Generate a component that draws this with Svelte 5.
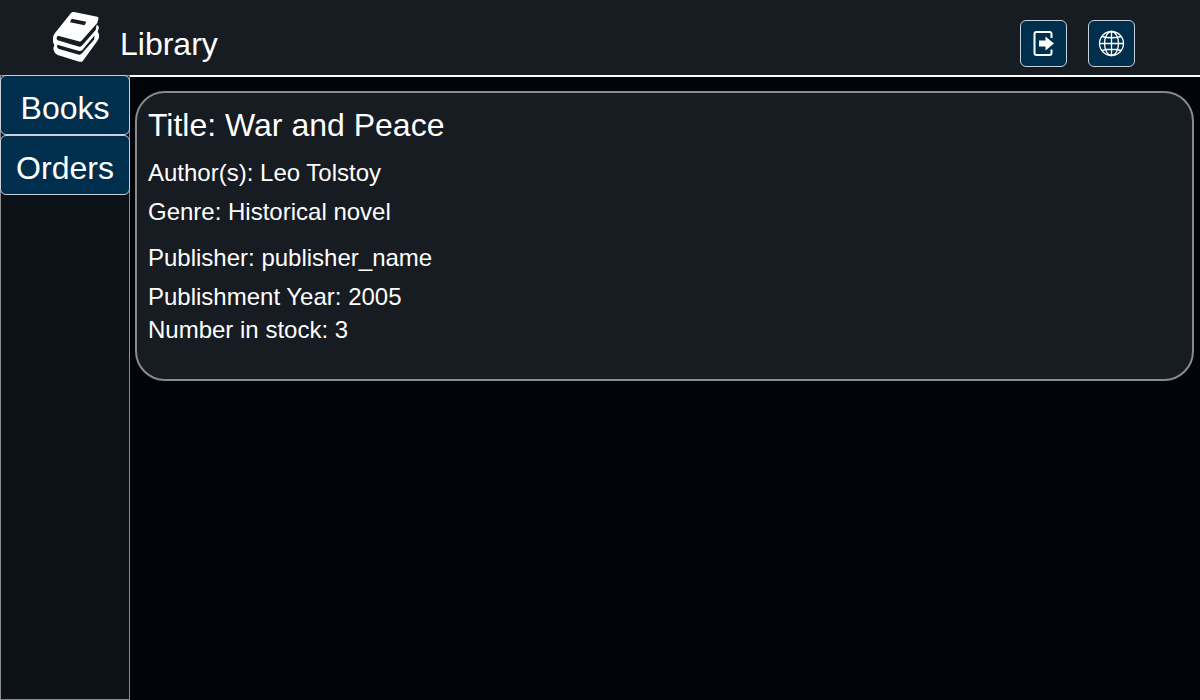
<script>
  const sections = ['Books', 'Orders'];
  const details = [
    { label: 'Author(s)', value: 'Leo Tolstoy', kind: 'wide' },
    { label: 'Genre', value: 'Historical novel', kind: 'wide last' },
    { label: 'Publisher', value: 'publisher_name', kind: 'wide' },
    { label: 'Publishment Year', value: '2005', kind: '' },
    { label: 'Number in stock', value: '3', kind: '' }
  ];
</script>

<div class="page">
  <header>
    <a class="brand" href="#home">
      <svg class="logo" viewBox="36 33 144 156" aria-hidden="true">
        <path fill="#fff" d="M93 39Q97 35 102 36L172 50Q178 52 175 58L170 74Q178 77 176 86L173 95Q179 101 177 111Q176 118 172 123L129 182Q125 187 118 185L53 165Q43 161 41 151Q39 143 43 136Q37 127 39 116Q39 106 45 99Z" />
        <path class="page-gap" d="M54 107Q46 114 53 121L118 140Q123 141 127 136L167 90L171 70L126 121Q122 126 116 124Z" />
        <path class="page-gap" d="M52 134Q49 143 57 147L117 164Q122 165 126 160L162 119L164 106L127 150Q123 154 117 153Z" />
        <path class="page-gap" d="M95 56L139 65L134 76L90 67Z" />
      </svg>
      <span>Library</span>
    </a>
    <div class="actions">
      <button aria-label="Sign out">
        <svg viewBox="0 0 27 27" aria-hidden="true">
          <path fill="none" stroke="#fff" stroke-width="2" d="M21.500 8V4Q21.500 2 19.500 2H6.500Q4.500 2 4.500 4V23Q4.500 25 6.500 25H19.500Q21.500 25 21.500 23V19.500" />
          <path fill="#fff" d="M9 10.500H15.500V6.500L24 13.500L15.500 20.500V16.500H9Z" />
        </svg>
      </button>
      <button aria-label="Language">
        <svg viewBox="0 0 27 27" aria-hidden="true">
          <g fill="none" stroke="#fff" stroke-width="1.300">
            <circle cx="13.500" cy="13.500" r="12" />
            <ellipse cx="13.500" cy="13.500" rx="7" ry="12" />
            <path d="M13.500 1.500V25.500M1.500 13.500H25.500M4 6.500Q13.500 9 23 6.500M4 20.500Q13.500 18 23 20.500" />
          </g>
        </svg>
      </button>
    </div>
  </header>

  <nav>
    {#each sections as name}
      <button>{name}</button>
    {/each}
  </nav>

  <main>
    <article>
      <h1>Title: War and Peace</h1>
      {#each details as { label, value, kind }}
        <p class={kind}>{label}: {value}</p>
      {/each}
    </article>
  </main>
</div>

<style>
  :global(body) {
    margin: 0;
    background: #010409;
  }

  .page {
    display: grid;
    grid-template: 75px 1fr / 130px 1fr;
    min-height: 100vh;
    color: #fff;
    background: #010409;
    font-family: "Liberation Sans", Arial, sans-serif;
  }

  header {
    grid-column: 1 / -1;
    display: flex;
    align-items: flex-start;
    justify-content: space-between;
    padding: 11px 65px 0 52px;
    background: #171b22;
  }

  .brand {
    display: flex;
    gap: 20px;
    color: inherit;
    font-size: 32px;
    line-height: 36px;
    text-decoration: none;
  }

  .brand span {
    padding-top: 15px;
  }

  .logo {
    width: 48px;
    height: 52px;
  }

  .page-gap {
    fill: #171b22;
  }

  button {
    box-sizing: border-box;
    padding: 0;
    border: 1px solid #c9d1d9;
    border-radius: 6px;
    color: #fff;
    background: #002f4e;
    font-family: inherit;
    cursor: pointer;
  }

  .actions {
    display: flex;
    gap: 21px;
    padding-top: 9px;
  }

  .actions button {
    display: grid;
    place-items: center;
    width: 47px;
    height: 47px;
  }

  .actions svg {
    width: 27px;
    height: 27px;
  }

  nav {
    display: flex;
    flex-direction: column;
    border: 1px solid #8b8d91;
    background: #0d1118;
  }

  nav button {
    height: 60px;
    margin: 0 -1px;
    padding-top: 6px;
    font-size: 32px;
  }

  nav button:first-child {
    margin-top: -1px;
  }

  main {
    padding: 14px 6px 14px 5px;
    border-top: 2px solid #fff;
  }

  article {
    padding: 14px 11px 33px;
    border: 2px solid #8b8b8b;
    border-radius: 30px;
    background: #171b22;
  }

  h1,
  p {
    margin: 0;
    font-weight: 400;
  }

  h1 {
    margin-bottom: 13px;
    font-size: 32px;
    line-height: 36px;
  }

  p {
    font-size: 24px;
    line-height: 33px;
  }

  .wide {
    margin-bottom: 6px;
  }

  .last {
    margin-bottom: 13px;
  }
</style>
